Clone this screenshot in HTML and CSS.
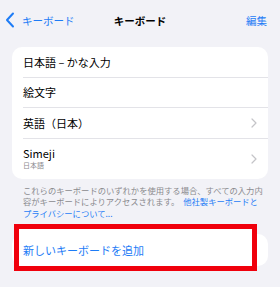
FILE: index.html
```html
<!DOCTYPE html>
<html lang="ja">
<head>
  <meta charset="UTF-8">
  <title>キーボード</title>
  <link rel="stylesheet" href="styles.css">
</head>
<body>

<!-- ナビゲーションバー -->
<div class="nav">
  <div class="nav-back">
    <svg width="10" height="16" viewBox="0 0 10 16"><polyline points="8,1.5 2,8 8,14.5" fill="none" stroke="#1e7cf6" stroke-width="2" stroke-linecap="round" stroke-linejoin="round"/></svg>
    <span>キーボード</span>
  </div>
  <div class="nav-title">キーボード</div>
  <div class="nav-edit">編集</div>
</div>

<!-- キーボード一覧 -->
<div class="card">
  <div class="row"><div class="row-body"><span>日本語 – かな入力</span></div></div>
  <div class="row"><div class="row-body"><span>絵文字</span></div></div>
  <div class="row">
    <div class="row-body">
      <span>英語（日本）</span>
      <svg class="chev" width="6" height="10" viewBox="0 0 6 10"><polyline points="1,1 5,5 1,9" fill="none" stroke="#c4c4c8" stroke-width="1.2" stroke-linecap="round" stroke-linejoin="round"/></svg>
    </div>
  </div>
  <div class="row row-tall">
    <div class="row-body">
      <div>
        <div class="row-name">Simeji</div>
        <div class="row-sub">日本語</div>
      </div>
      <svg class="chev" width="6" height="10" viewBox="0 0 6 10"><polyline points="1,1 5,5 1,9" fill="none" stroke="#c4c4c8" stroke-width="1.2" stroke-linecap="round" stroke-linejoin="round"/></svg>
    </div>
  </div>
</div>

<p class="note">これらのキーボードのいずれかを使用する場合、すべての入力内<br>容がキーボードによりアクセスされます。<span class="link">他社製キーボードと<br>プライバシーについて...</span></p>

<!-- 追加ボタン -->
<div class="add-wrap">
  <div class="card add-card">
    <div class="highlight"></div>
    <span class="add-label">新しいキーボードを追加</span>
  </div>
</div>

</body>
</html>
```

FILE: styles.css
```css
body {
  margin: 0;
  background-color: #f2f2f7;
  font-family: "Noto Sans CJK JP", "Noto Sans", sans-serif;
  color: #000;
}
.nav {
  height: 40px;
  display: grid;
  grid-template-columns: 1fr auto 1fr;
  align-items: center;
  font-size: 10.5px;
}
.nav-back {
  display: flex;
  align-items: center;
  gap: 7px;
  padding-left: 5px;
  color: #1e7cf6;
}
.nav-back svg {
  display: block;
}
.nav-title {
  font-weight: bold;
}
.nav-edit {
  text-align: right;
  padding-right: 13px;
  color: #1e7cf6;
}
.card {
  margin: 7px 12px 0;
  background-color: #ffffff;
  border-radius: 10px;
}
.row {
  height: 30.5px;
  padding-left: 11px;
  font-size: 11px;
}
.row-tall {
  height: 40px;
}
.row-body {
  height: 100%;
  box-sizing: border-box;
  display: flex;
  align-items: center;
  justify-content: space-between;
  padding-right: 11px;
  border-bottom: 1px solid #e3e3e8;
}
.row:last-child .row-body {
  border-bottom: none;
}
.row-name {
  line-height: 13px;
}
.row-sub {
  font-size: 7px;
  line-height: 10px;
  color: #8a8a8e;
}
.chev {
  display: block;
}
.note {
  margin: 6px 0 0;
  padding: 0 11px 0 23px;
  font-size: 8.3px;
  line-height: 11.5px;
  color: #8a8a8e;
  white-space: nowrap;
}
.link {
  margin-left: 4px;
  color: #1e7cf6;
}
.add-wrap {
  padding: 15px 0 20px;
}
.add-card {
  position: relative;
  margin-top: 0;
  height: 32px;
  display: flex;
  align-items: center;
  padding-left: 11px;
}
.highlight {
  position: absolute;
  left: 2px;
  right: 11px;
  top: -10px;
  bottom: -5px;
  border: 5px solid #f0000c;
  background-color: #ffffff;
}
.add-label {
  position: relative;
  font-size: 11px;
  color: #1e7cf6;
}
```
